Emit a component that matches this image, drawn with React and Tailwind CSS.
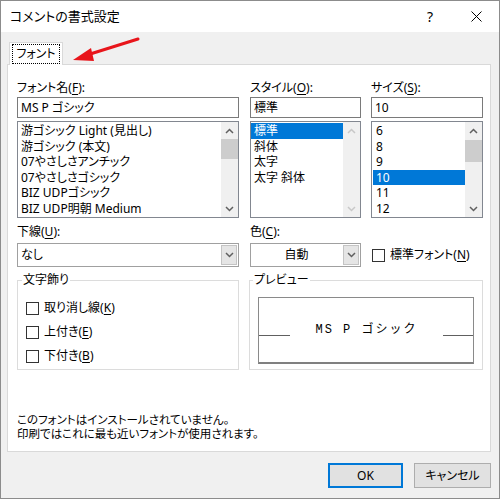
import React from "react";

const Up = ({ c = "#606060" }) => (
  <svg width="9" height="6" viewBox="0 0 9 6">
    <path d="M1 5 L4.5 1.5 L8 5" fill="none" stroke={c} strokeWidth="1.5" />
  </svg>
);
const Down = ({ c = "#606060" }) => (
  <svg width="9" height="6" viewBox="0 0 9 6">
    <path d="M1 1 L4.5 4.5 L8 1" fill="none" stroke={c} strokeWidth="1.5" />
  </svg>
);

function Scrollbar({ thumbH = 20, thumbMt = 0, disabled = false }) {
  const c = disabled ? "#c8c8c8" : "#606060";
  return (
    <div className="w-[17px] h-full bg-[#f0f0f0] flex flex-col shrink-0">
      <div className="h-[17px] flex items-center justify-center">
        <Up c={c} />
      </div>
      {!disabled && <div className="bg-[#cdcdcd]" style={{ height: thumbH, marginTop: thumbMt }} />}
      <div className="flex-1" />
      <div className="h-[17px] flex items-center justify-center">
        <Down c={c} />
      </div>
    </div>
  );
}

function ListBox({ items, selected, thumbH, thumbMt, disabled, inset = 0 }) {
  return (
    <div className="mt-[3px] h-[97px] border border-[#828790] bg-white flex">
      <div className="flex-1 pt-[1px] overflow-hidden" style={{ paddingLeft: inset }}>
        {items.map((it) => (
          <div
            key={it}
            className={
              "h-[15.5px] leading-[15.5px] px-[3px] whitespace-nowrap " +
              (it === selected ? "bg-[#0078d7] text-white" : "text-black")
            }
          >
            {it}
          </div>
        ))}
      </div>
      <Scrollbar thumbH={thumbH} thumbMt={thumbMt} disabled={disabled} />
    </div>
  );
}

function Label({ children }) {
  return <div className="h-[16px] leading-[16px] whitespace-nowrap">{children}</div>;
}

function TextBox({ children }) {
  return (
    <div className="mt-[1px] h-[21px] border border-[#7a7a7a] bg-white px-[3px] leading-[19px] whitespace-nowrap">
      {children}
    </div>
  );
}

function Combo({ children, center }) {
  return (
    <div className="mt-[3px] h-[24px] border border-[#a0a0a0] bg-white flex">
      <div className={"flex-1 flex items-center px-[3px] " + (center ? "justify-center" : "")}>{children}</div>
      <div className="m-px w-[16px] bg-[#e5e5e5] border border-[#c4c4c4] flex items-center justify-center">
        <Down />
      </div>
    </div>
  );
}

function Check({ children }) {
  return (
    <div className="h-[24px] flex items-center">
      <div className="w-[13px] h-[13px] border border-[#333333] bg-white" />
      <span className="ml-[5px] whitespace-nowrap">{children}</span>
    </div>
  );
}

const U = ({ children }) => <u className="underline underline-offset-2">{children}</u>;

export default function App() {
  return (
    <div className="w-[500px] h-[499px] border border-[#8c8c8c] bg-[#f0f0f0] flex flex-col relative overflow-hidden text-[12px] text-black font-['Noto_Sans','Noto_Sans_CJK_JP',sans-serif] [font-feature-settings:'palt']">
      {/* title bar */}
      <div className="h-[31px] bg-white flex items-center shrink-0">
        <div className="pl-[9px] text-[13px] flex-1">コメントの書式設定</div>
        <div className="w-[46px] h-full flex items-center justify-center text-[14px]">?</div>
        <div className="w-[46px] h-full flex items-center justify-center">
          <svg width="11" height="11" viewBox="0 0 11 11">
            <path d="M0.5 0.5 L10.5 10.5 M10.5 0.5 L0.5 10.5" stroke="#000" strokeWidth="1" />
          </svg>
        </div>
      </div>

      {/* body */}
      <div className="pl-[6px] flex flex-col">
        <div className="mt-[10px] flex">
          <div className="ml-[2px] w-[54px] h-[23px] border border-b-0 border-[#d9d9d9] bg-white relative z-10 -mb-px">
            <div className="mt-[1px] ml-[2px] w-[48px] h-[20px] border border-dotted border-black flex items-center justify-center leading-none">
              フォント
            </div>
          </div>
        </div>

        <div className="w-[484px] h-[388px] border border-[#d9d9d9] bg-white flex flex-col pt-[15px] pl-[9px]">
          <div className="flex">
            {/* col 1 */}
            <div className="w-[222px] flex flex-col">
              <Label>
                フォント名(<U>F</U>):
              </Label>
              <TextBox>MS P ゴシック</TextBox>
              <ListBox
                items={[
                  "游ゴシック Light (見出し)",
                  "游ゴシック (本文)",
                  "07やさしさアンチック",
                  "07やさしさゴシック",
                  "BIZ UDPゴシック",
                  "BIZ UDP明朝 Medium",
                ]}
                thumbH={20}
                thumbMt={0}
              />
              <div className="mt-[6px]">
                <Label>
                  下線(<U>U</U>):
                </Label>
              </div>
              <Combo>なし</Combo>
            </div>
            {/* col 2 */}
            <div className="ml-[11px] w-[111px] flex flex-col">
              <Label>
                スタイル(<U>O</U>):
              </Label>
              <TextBox>標準</TextBox>
              <ListBox items={["標準", "斜体", "太字", "太字 斜体"]} selected="標準" disabled />
              <div className="mt-[6px]">
                <Label>
                  色(<U>C</U>):
                </Label>
              </div>
              <Combo center>自動</Combo>
            </div>
            {/* col 3 */}
            <div className="ml-[10px] w-[112px] flex flex-col">
              <Label>
                サイズ(<U>S</U>):
              </Label>
              <TextBox>10</TextBox>
              <ListBox items={["6", "8", "9", "10", "11", "12"]} selected="10" thumbH={22} thumbMt={1} inset={1} />
              <div className="mt-[6px] h-[16px]" />
              <div className="mt-[3px] h-[24px] pl-[1px]">
                <Check>
                  標準フォント(<U>N</U>)
                </Check>
              </div>
            </div>
          </div>

          {/* groups */}
          <div className="mt-[5px] flex">
            <fieldset className="w-[222px] h-[98px] border border-[#dcdcdc]">
              <legend className="ml-[4px] px-[1px] leading-[16px]">文字飾り</legend>
              <div className="pt-[8px] pl-[8px] flex flex-col">
                <Check>
                  取り消し線(<U>K</U>)
                </Check>
                <Check>
                  上付き(<U>E</U>)
                </Check>
                <Check>
                  下付き(<U>B</U>)
                </Check>
              </div>
            </fieldset>
            <fieldset className="ml-[10px] w-[234px] h-[98px] border border-[#dcdcdc]">
              <legend className="ml-[3px] px-[1px] leading-[16px]">プレビュー</legend>
              <div className="mt-[9px] ml-[8px] w-[216px] h-[67px] border border-[#8a8a8a] border-b-2 border-b-[#808080] flex items-center">
                <div className="w-[31px] h-px bg-[#606060] mt-[11px]" />
                <div className="flex-1 text-center tracking-[2px] font-['Liberation_Mono','Noto_Sans_CJK_JP',monospace] [font-feature-settings:normal]">
                  MS P ゴシック
                </div>
                <div className="w-[30px] h-px bg-[#606060] mt-[11px]" />
              </div>
            </fieldset>
          </div>

          <div className="mt-[43px] leading-[14px] text-[11.5px] font-['Liberation_Sans','Noto_Sans_CJK_JP',sans-serif]">
            <div>このフォントはインストールされていません。</div>
            <div>印刷ではこれに最も近いフォントが使用されます。</div>
          </div>
        </div>
      </div>

      {/* buttons */}
      <div className="mt-[11px] flex justify-end pr-[8px]">
        <div className="w-[75px] h-[25px] border-2 border-[#0078d7] bg-[#e1e1e1] flex items-center justify-center">
          OK
        </div>
        <div className="ml-[11px] w-[77px] h-[25px] border border-[#adadad] bg-[#e1e1e1] flex items-center justify-center">
          キャンセル
        </div>
      </div>

      {/* red arrow annotation */}
      <svg className="absolute left-0 top-0 pointer-events-none" width="500" height="499" viewBox="0 0 500 499">
        <line x1="137" y1="38" x2="86" y2="54" stroke="#e8151b" strokeWidth="3" strokeLinecap="round" />
        <polygon points="72,59 90,47 93,60" fill="#e8151b" />
      </svg>
    </div>
  );
}
